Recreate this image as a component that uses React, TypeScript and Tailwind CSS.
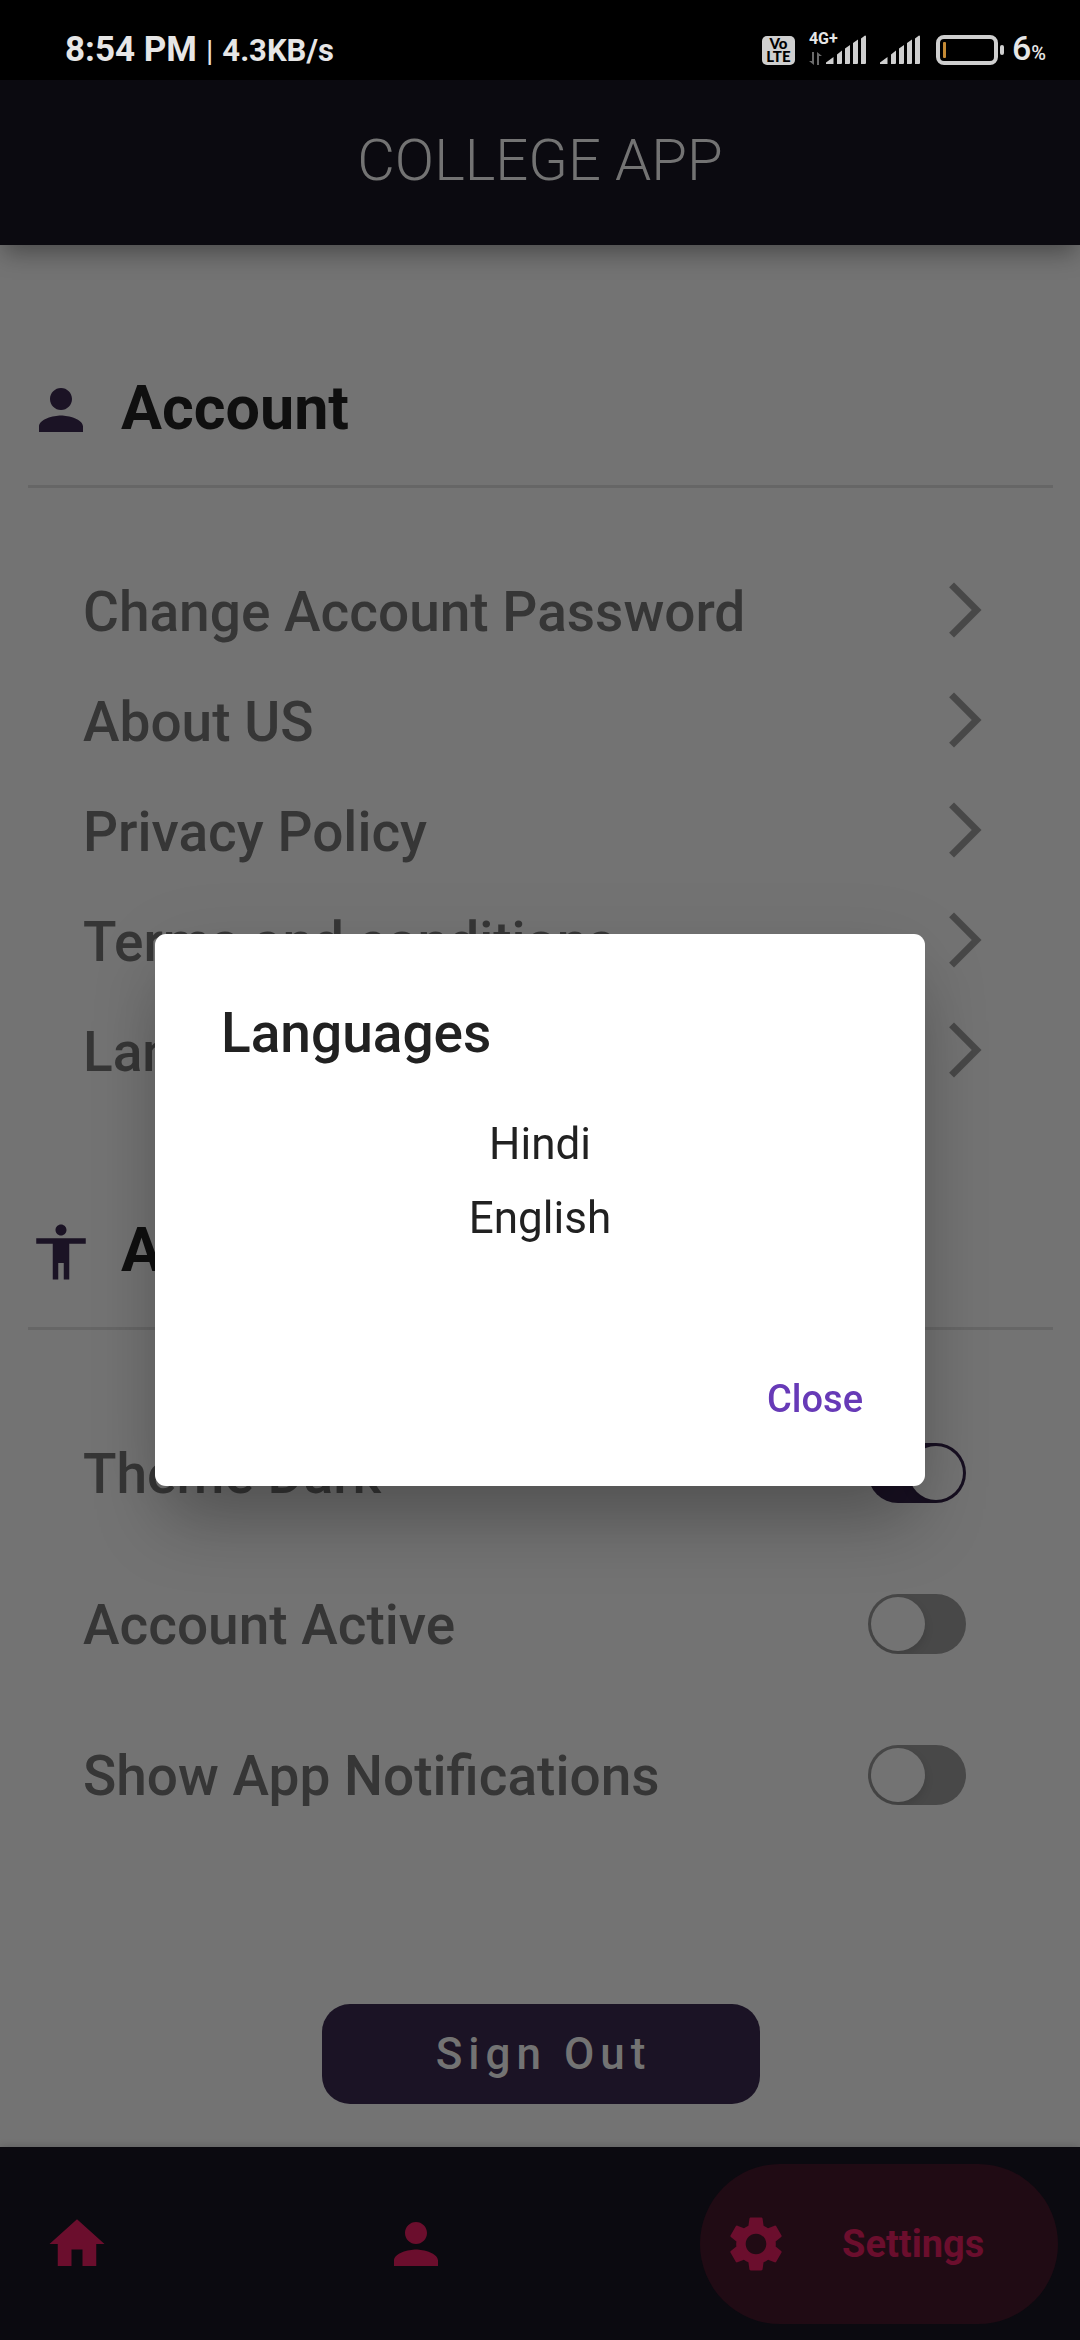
import { useState } from "react";

const PERSON =
  "M12 12c2.21 0 4-1.79 4-4s-1.79-4-4-4-4 1.79-4 4 1.79 4 4 4zm0 2c-2.67 0-8 1.34-8 4v2h16v-2c0-2.66-5.33-4-8-4z";
const ACCESSIBILITY =
  "M12 2c1.1 0 2 .9 2 2s-.9 2-2 2-2-.9-2-2 .9-2 2-2zm9 7h-6v13h-2v-6h-2v6H9V9H3V7h18v2z";
const CHEVRON = "M6.23 20.23L8 22l10-10L8 2 6.23 3.77 14.46 12z";
const HOME = "M10 20v-6h4v6h5v-8h3L12 3 2 12h3v8z";
const SETTINGS =
  "M19.14 12.94c.04-.3.06-.61.06-.94 0-.32-.02-.64-.07-.94l2.03-1.58c.18-.14.23-.41.12-.61l-1.92-3.32c-.12-.22-.37-.29-.59-.22l-2.39.96c-.5-.38-1.03-.7-1.62-.94l-.36-2.54c-.04-.24-.24-.41-.48-.41h-3.84c-.24 0-.43.17-.47.41l-.36 2.54c-.59.24-1.13.57-1.62.94l-2.39-.96c-.22-.08-.47 0-.59.22L2.74 8.87c-.12.21-.08.47.12.61l2.03 1.58c-.05.3-.09.63-.09.94s.02.64.07.94l-2.03 1.58c-.18.14-.23.41-.12.61l1.92 3.32c.12.22.37.29.59.22l2.39-.96c.5.38 1.03.7 1.62.94l.36 2.54c.05.24.24.41.48.41h3.84c.24 0 .44-.17.47-.41l.36-2.54c.59-.24 1.13-.56 1.62-.94l2.39.96c.22.08.47 0 .59-.22l1.92-3.32c.12-.22.07-.47-.12-.61l-2.01-1.58zM12 15.75c-2.07 0-3.75-1.68-3.75-3.75s1.68-3.75 3.75-3.75 3.75 1.68 3.75 3.75-1.68 3.75-3.75 3.75z";

function Icon({ d }: { d: string }) {
  return (
    <svg viewBox="0 0 24 24" className="size-[66px] shrink-0" fill="currentColor" aria-hidden="true">
      <path d={d} />
    </svg>
  );
}

function Signal() {
  return (
    <svg viewBox="0 0 40 30" className="h-[30px] w-10" fill="#cfcfcf" aria-hidden="true">
      <path d="M0 29v-1.5L7.5 22v7zM11 29V19.5l5-4V28q0 1-1 1zM19 29V13.5l5-3.5V28q0 1-1 1zM27 29V8l5-3.5V28q0 1-1 1zM35 29V3.5L39 .5q1 0 1 1V28q0 1-1 1z" />
    </svg>
  );
}

function StatusBar() {
  return (
    <div className="flex h-20 shrink-0 items-center justify-between bg-black pt-5 pr-[34px] pl-[65px] text-[#e6e6e6]">
      <div className="flex items-baseline gap-[9px] font-bold">
        <span className="text-[35px] leading-10">8:54 PM</span>
        <span className="text-[30px] leading-10 font-normal">|</span>
        <span className="text-[31px] leading-10">4.3KB/s</span>
      </div>
      <div className="flex h-[30px] items-center">
        <div className="flex h-[29px] w-[33px] flex-col items-center justify-center rounded-[5px] bg-[#cfcfcf] font-['Lato'] text-[15px] leading-[13px] font-black text-black">
          <span className="h-[13px]">Vo</span>
          <span className="h-[13px]">LTE</span>
        </div>
        <div className="relative ml-[31px] flex">
          <Signal />
          <span className="absolute -top-1 -left-[17px] text-[16px] leading-4 font-bold">4G+</span>
          <svg viewBox="0 0 13 13" className="absolute bottom-0 -left-[17px] size-[13px]" fill="#6b6b6b" aria-hidden="true">
            <path d="M3 0h2v13L0 9h3zM8 13h2V4h3L8 0z" />
          </svg>
        </div>
        <div className="ml-[14px]">
          <Signal />
        </div>
        <svg viewBox="0 0 68 30" className="ml-4 h-[30px] w-[68px]" aria-hidden="true">
          <rect x="2" y="2" width="58" height="26" rx="6" fill="none" stroke="#cfcfcf" strokeWidth="4" />
          <rect x="7" y="7" width="3" height="16" rx="1" fill="#c48a35" />
          <rect x="64" y="10" width="4" height="10" rx="2" fill="#cfcfcf" />
        </svg>
        <div className="ml-2 flex items-baseline font-medium">
          <span className="text-[34px] leading-10">6</span>
          <span className="text-[20px] leading-10">%</span>
        </div>
      </div>
    </div>
  );
}

function SectionTitle({ icon, children }: { icon: string; children: string }) {
  return (
    <div className="flex items-center gap-[27px] border-b-3 border-[#666666] pb-[42px]">
      <span className="text-[#1b1325]">
        <Icon d={icon} />
      </span>
      <h2 className="h-[66px] text-[61px] leading-[62px] font-bold text-[#0f0f0f]">{children}</h2>
    </div>
  );
}

const links = ["Change Account Password", "About US", "Privacy Policy", "Terms and conditions", "Language"];

function Toggle({ label, initial }: { label: string; initial: boolean }) {
  const [on, setOn] = useState(initial);
  return (
    <label className="flex h-[151px] items-center justify-between pr-8">
      <span className="pt-[2px]">{label}</span>
      <input
        type="checkbox"
        role="switch"
        checked={on}
        onChange={(e) => setOn(e.target.checked)}
        className="h-[60px] w-[98px] appearance-none overflow-hidden rounded-full bg-[#484848] p-[3px] before:block before:size-[54px] before:rounded-full before:bg-[#737373] before:shadow-[0_4px_10px_rgba(0,0,0,0.12)] checked:bg-[#181022] checked:before:ml-auto"
      />
    </label>
  );
}

export default function App() {
  const [open, setOpen] = useState(true);
  return (
    <div className="flex min-h-screen flex-col bg-[#737373] font-['Roboto',sans-serif]">
      <StatusBar />
      <header className="relative z-10 flex h-[165px] shrink-0 items-center justify-center bg-[#0b0a10] pb-[6px] shadow-[0_12px_22px_-4px_rgba(0,0,0,0.35)]">
        <h1 className="text-[58px] leading-[68px] font-light text-[#737373]">COLLEGE APP</h1>
      </header>

      <main className="flex flex-1 flex-col pt-[132px] pr-[27px] pl-7">
        <section>
          <SectionTitle icon={PERSON}>Account</SectionTitle>
          <ul className="px-[55px] pt-[67px] text-[55px] leading-[66px] font-medium text-[#363636]">
            {links.map((label) => (
              <li key={label}>
                <button type="button" className="flex h-[110px] w-full items-center justify-between text-left">
                  <span className="pt-1">{label}</span>
                  <span className="text-[#484848]">
                    <Icon d={CHEVRON} />
                  </span>
                </button>
              </li>
            ))}
          </ul>
        </section>

        <section className="pt-[114px]">
          <SectionTitle icon={ACCESSIBILITY}>App Settings</SectionTitle>
          <div className="px-[55px] pt-[67px] text-[55px] leading-[66px] font-medium text-[#363636]">
            <Toggle label="Theme Dark" initial={true} />
            <Toggle label="Account Active" initial={false} />
            <Toggle label="Show App Notifications" initial={false} />
          </div>
        </section>

        <button
          type="button"
          className="mx-auto mt-auto mb-[43px] h-[100px] w-[438px] rounded-[28px] bg-[#1b1325] pl-[6px] text-[44px] leading-[52px] font-medium tracking-[6px] text-[#737373]"
        >
          Sign Out
        </button>
      </main>

      <nav className="flex h-[193px] shrink-0 items-center justify-between bg-[#0b0a10] px-[22px] text-[#6b0e2d] shadow-[0_0_8px_rgba(0,0,0,0.2)]">
        <button type="button" aria-label="Home" className="px-[22px]">
          <Icon d={HOME} />
        </button>
        <button type="button" aria-label="Profile" className="px-[22px]">
          <Icon d={PERSON} />
        </button>
        <button type="button" className="flex h-40 w-[358px] items-center gap-[53px] rounded-full bg-[#200b14] pl-[23px]">
          <Icon d={SETTINGS} />
          <span className="text-[38px] leading-[46px] font-bold">Settings</span>
        </button>
      </nav>

      {open && (
        <div className="fixed inset-x-0 top-20 bottom-0 z-20 flex items-center justify-center px-[155px]">
          <div
            role="dialog"
            aria-modal="true"
            aria-labelledby="languages-title"
            className="w-full rounded-[11px] bg-white pt-[67px] pb-[38px] text-[#212121] shadow-[0_44px_70px_-10px_rgba(0,0,0,0.26),0_10px_80px_rgba(0,0,0,0.07)]"
          >
            <h2 id="languages-title" className="px-[66px] text-[55px] leading-[64px] font-medium">
              Languages
            </h2>
            <div className="mt-[42px] flex flex-col items-center text-[44px] leading-[74px]">
              <button type="button">Hindi</button>
              <button type="button">English</button>
            </div>
            <div className="mt-[94px] flex justify-end pr-[22px]">
              <button
                type="button"
                onClick={() => setOpen(false)}
                className="h-[99px] px-10 text-[38px] leading-[46px] font-medium text-[#673ab7]"
              >
                Close
              </button>
            </div>
          </div>
        </div>
      )}
    </div>
  );
}
